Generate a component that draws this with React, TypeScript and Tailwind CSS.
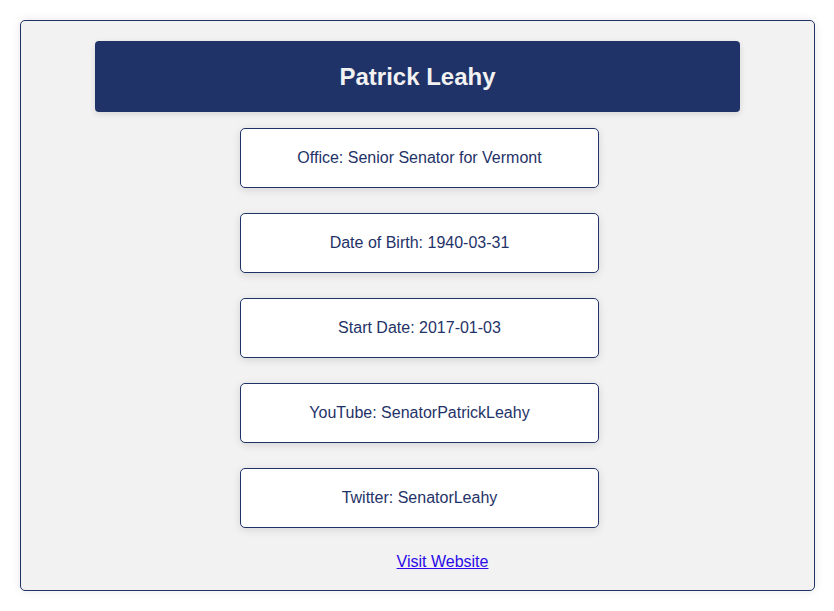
const details = [
  "Office: Senior Senator for Vermont",
  "Date of Birth: 1940-03-31",
  "Start Date: 2017-01-03",
  "YouTube: SenatorPatrickLeahy",
  "Twitter: SenatorLeahy",
];

export default function App() {
  return (
    <div className="min-h-screen bg-white py-5 pl-5 pr-[19px] font-['Liberation_Sans',Arial,sans-serif]">
      <div className="rounded-[5px] border border-[#1f3368] bg-[#f2f2f2] pt-5 pb-[19px] shadow-[0_0_10px_rgba(0,0,0,0.1)]">
        {/* header */}
        <div className="mx-auto flex h-[71px] w-[645px] items-center justify-center rounded-[4px] bg-[#1f3368] shadow-[0_2px_6px_rgba(0,0,0,0.12)]">
          <h1 className="text-2xl font-bold text-[#f2f2f2]">Patrick Leahy</h1>
        </div>

        {/* detail cards */}
        <div className="mt-4 flex flex-col items-center gap-[25px] pl-[4px]">
          {details.map((d) => (
            <div
              key={d}
              className="flex h-[60px] w-[359px] items-center justify-center rounded-[5px] border border-[#1f3368] bg-white text-base text-[#1f3368] shadow-[0_2px_8px_rgba(0,0,0,0.12)]"
            >
              {d}
            </div>
          ))}
        </div>

        <div className="mt-[25px] flex justify-center pl-[50px]">
          <a href="#" className="text-base leading-[18px] text-[#2a0ae6] underline">
            Visit Website
          </a>
        </div>
      </div>
    </div>
  );
}
